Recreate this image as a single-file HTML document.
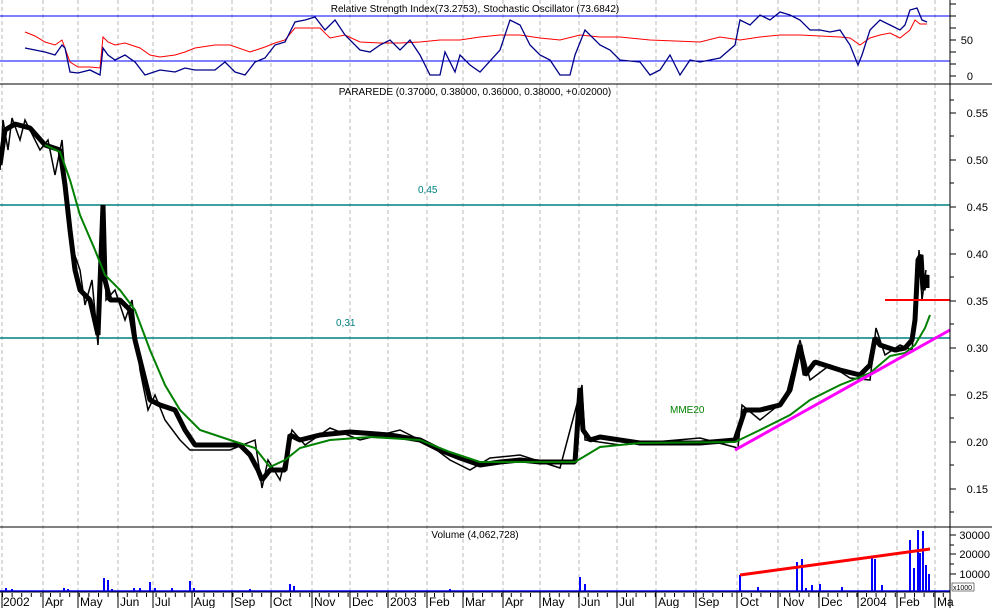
<!DOCTYPE html><html><head><style>body{margin:0;background:#fff}svg{display:block;font-family:"Liberation Sans",sans-serif}</style></head><body>
<svg width="992" height="608" viewBox="0 0 992 608">
<defs><pattern id="wk" x="2" y="0" width="9.6" height="8" patternUnits="userSpaceOnUse"><rect x="0" y="0" width="1" height="5" fill="#000"/></pattern></defs>
<rect width="992" height="608" fill="#fff"/>
<g stroke="#b8b8b8" stroke-dasharray="4,3" stroke-width="1">
<path d="M2 0V592M43 0V592M78 0V592M118 0V592M153 0V592M192 0V592M232 0V592M271 0V592M312 0V592M350 0V592M388 0V592M427 0V592M463 0V592M503 0V592M540 0V592M579 0V592M617 0V592M656 0V592M696 0V592M737 0V592M778 0V592M819 0V592M858 0V592M897 0V592M935 0V592"/>
</g>
<line x1="0" y1="16" x2="950" y2="16" stroke="#00f"/>
<line x1="0" y1="61" x2="950" y2="61" stroke="#00f"/>
<text x="475" y="12" font-size="10" text-anchor="middle">Relative Strength Index(73.2753), Stochastic Oscillator (73.6842)</text>
<polyline fill="none" stroke="#f00" stroke-width="1" points="25,32 35,36 45,42 55,45 62,40 65,48 70,62 78,67 90,67 100,68 103,37 108,42 115,45 125,43 140,48 150,55 160,57 175,55 185,52 195,48 215,45 230,45 250,52 265,47 275,43 285,40 295,28 305,28 320,28 330,38 345,35 360,42 380,43 400,43 420,42 440,40 460,40 480,37 500,35 520,35 540,38 560,40 580,35 600,37 620,37 650,40 700,42 720,37 740,40 760,37 780,35 800,35 820,36 840,37 850,38 860,45 870,38 880,35 890,33 900,38 910,30 915,20 920,24 927,24"/>
<polyline fill="none" stroke="#008" stroke-width="1.3" points="25,48 35,50 45,52 55,55 62,45 65,48 70,72 78,73 90,70 100,75 103,48 108,55 115,60 125,55 135,62 145,75 160,70 175,72 185,68 195,70 215,70 225,62 235,72 245,75 255,62 265,58 275,45 285,42 295,22 305,20 315,17 325,30 335,20 345,35 360,50 370,52 380,45 390,40 400,50 410,40 420,55 430,75 440,75 445,52 455,72 460,55 470,65 480,72 500,50 510,20 520,25 530,45 540,55 550,60 560,75 570,75 575,55 585,30 600,45 610,50 620,60 640,62 650,75 660,70 670,55 680,75 690,60 700,62 720,58 735,45 740,20 750,25 760,15 770,20 780,12 790,15 800,20 810,30 820,30 830,32 840,30 850,45 858,65 862,55 870,30 880,20 890,25 900,30 905,25 910,10 917,8 922,20 927,22"/>
<line x1="0" y1="84" x2="992" y2="84" stroke="#000"/>
<text x="475" y="95" font-size="10" text-anchor="middle">PARAREDE (0.37000, 0.38000, 0.36000, 0.38000, +0.02000)</text>
<line x1="0" y1="205" x2="950" y2="205" stroke="#008080" stroke-width="1.5"/>
<line x1="0" y1="338" x2="950" y2="338" stroke="#008080" stroke-width="1.5"/>
<text x="418" y="193" font-size="10" fill="#008080">0,45</text>
<text x="336" y="326" font-size="10" fill="#008080">0,31</text>
<text x="670" y="413" font-size="10" fill="#008000">MME20</text>
<polyline fill="none" stroke="#000" stroke-width="5" stroke-linejoin="bevel" points="0,165 5,130 15,124 30,128 45,145 60,150 65,185 70,230 75,270 80,290 90,300 98,335 103,205 105,280 110,300 120,300 130,310 135,340 145,380 150,400 160,405 175,410 185,430 195,445 240,445 250,455 258,470 262,480 270,470 285,470 290,435 300,440 320,435 350,432 390,435 420,440 440,450 460,458 480,465 500,462 520,460 540,462 575,462 580,388 583,430 590,440 600,437 640,443 700,443 735,440 745,410 760,410 780,405 790,390 800,345 805,375 815,362 840,370 860,375 870,365 875,338 880,345 895,350 905,348 912,340 915,320 918,260 921,255 923,290 927,275 927,288"/>
<polyline fill="none" stroke="#000" stroke-width="1.5" points="0,170 3,120 8,150 12,118 20,140 25,120 40,150 48,140 55,175 62,140 68,210 73,250 80,270 85,305 92,280 98,345 104,205 106,300 115,290 125,320 132,300 140,370 148,410 155,395 165,420 180,440 190,450 230,450 255,440 262,488 268,460 280,480 292,430 305,445 330,428 360,440 400,430 430,445 450,460 470,470 490,458 520,455 560,468 582,385 585,440 620,445 700,438 738,448 742,405 760,420 785,400 800,340 810,380 830,365 850,378 870,380 876,328 885,355 900,345 912,350 917,300 919,250 922,300 926,270"/>
<polyline fill="none" stroke="#008000" stroke-width="2" points="45,145 60,152 70,180 80,215 95,250 105,275 120,290 135,310 150,350 165,385 180,410 200,430 230,440 255,448 270,467 285,460 300,448 330,440 370,437 420,440 450,452 480,462 520,462 575,462 600,447 640,443 735,442 760,430 790,415 810,400 840,385 870,373 890,356 905,353 915,345 925,328 930,315"/>
<line x1="735" y1="450" x2="950" y2="330" stroke="#f0f" stroke-width="3"/>
<line x1="885" y1="300" x2="950" y2="300" stroke="#f00" stroke-width="2"/>
<line x1="0" y1="527" x2="992" y2="527" stroke="#000"/>
<text x="475" y="538" font-size="10" text-anchor="middle">Volume (4,062,728)</text>
<line x1="0" y1="591" x2="950" y2="591" stroke="#00f" stroke-width="1.5"/>
<g stroke="#00f" stroke-width="2">
<path d="M6 591V588M12 591V589M64 591V588M68 591V589M104 591V578M108 591V580M112 591V589M134 591V588M140 591V588M150 591V582M155 591V588M172 591V588M190 591V581M194 591V588M250 591V589M290 591V584M294 591V586M450 591V589M580 591V577M585 591V584M740 591V575M758 591V587M797 591V562M802 591V559M806 591V588M812 591V585M820 591V584M842 591V587M872 591V556M875 591V559M882 591V585M910 591V540M914 591V568M918 591V530M920 591V553M923 591V531M926 591V565M929 591V574"/>
</g>
<line x1="740" y1="575" x2="930" y2="549" stroke="#f00" stroke-width="3"/>
<line x1="0" y1="592" x2="950" y2="592" stroke="#000"/>
<rect x="0" y="593" width="950" height="5" fill="url(#wk)"/>
<line x1="950" y1="0" x2="950" y2="608" stroke="#000"/>
<g stroke="#000"><path d="M950 4h6M950 16h6M950 28h6M950 40h6M950 52h6M950 64h6M950 76h6M950 100h4M950 113h6M950 136h4M950 160h6M950 183h4M950 207h6M950 230h4M950 254h6M950 277h4M950 301h6M950 324h4M950 348h6M950 371h4M950 395h6M950 418h4M950 442h6M950 465h4M950 489h6M950 512h4M950 535h6M950 545h4M950 554h6M950 564h4M950 574h6"/></g>
<g font-size="11" text-anchor="end">
<text x="973" y="44">50</text><text x="973" y="80">0</text>
<text x="988" y="117">0.55</text><text x="988" y="164">0.50</text><text x="988" y="211">0.45</text><text x="988" y="258">0.40</text><text x="988" y="305">0.35</text><text x="988" y="352">0.30</text><text x="988" y="399">0.25</text><text x="988" y="446">0.20</text><text x="988" y="493">0.15</text>
<text x="990" y="539">30000</text><text x="990" y="558">20000</text><text x="990" y="578">10000</text>
</g>
<rect x="952" y="583" width="22" height="8" fill="#fff" stroke="#000" stroke-width="0.5"/><text x="953" y="590" font-size="7">x1000</text>
<g font-size="12">
<text x="3" y="606">2002</text><text x="45" y="606">Apr</text><text x="80" y="606">May</text><text x="120" y="606">Jun</text><text x="155" y="606">Jul</text><text x="194" y="606">Aug</text><text x="234" y="606">Sep</text><text x="273" y="606">Oct</text><text x="314" y="606">Nov</text><text x="352" y="606">Dec</text><text x="390" y="606">2003</text><text x="429" y="606">Feb</text><text x="465" y="606">Mar</text><text x="505" y="606">Apr</text><text x="542" y="606">May</text><text x="581" y="606">Jun</text><text x="619" y="606">Jul</text><text x="658" y="606">Aug</text><text x="698" y="606">Sep</text><text x="740" y="606">Oct</text><text x="783" y="606">Nov</text><text x="821" y="606">Dec</text><text x="860" y="606">2004</text><text x="899" y="606">Feb</text><text x="937" y="606">Ma</text>
</g>
<g stroke="#000"><path d="M2 592V608M43 592V608M78 592V608M118 592V608M153 592V608M192 592V608M232 592V608M271 592V608M312 592V608M350 592V608M388 592V608M427 592V608M463 592V608M503 592V608M540 592V608M579 592V608M617 592V608M656 592V608M696 592V608M737 592V608M778 592V608M819 592V608M858 592V608M897 592V608M935 592V608"/></g>
</svg>
</body></html>
